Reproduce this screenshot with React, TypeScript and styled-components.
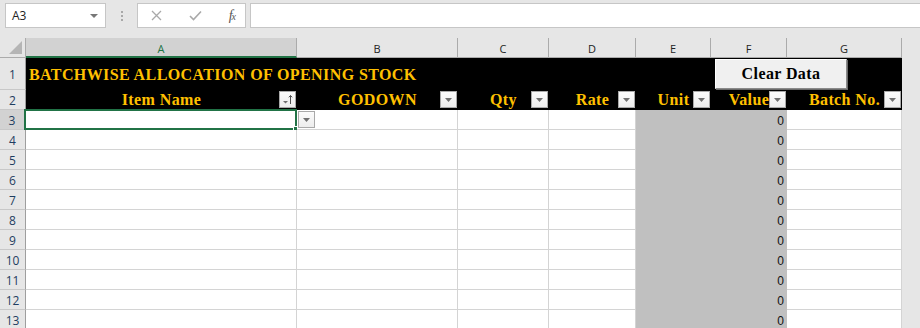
import React from 'react'
import styled, { createGlobalStyle, css } from 'styled-components'

const Colors = {
    chrome: '#e6e6e6',
    header: '#e6e6e6',
    headerSelected: '#d2d2d2',
    headerLine: '#ababab',
    rowLine: '#c8c8c8',
    grid: '#d4d4d4',
    excelGreen: '#217346',
    gold: '#ffc000',
    shaded: '#c0c0c0',
}

const GlobalStyle = createGlobalStyle`
    html, body {
        margin: 0;
        padding: 0;
        background: ${Colors.chrome};
    }
    body {
        width: 920px;
        height: 328px;
        overflow: hidden;
        font-family: "Liberation Sans", Arial, sans-serif;
    }
`

type Column = { key: string; label: string; sort?: boolean; shaded?: boolean; value?: string }

const columns: Column[] = [
    { key: 'A', label: 'Item Name', sort: true },
    { key: 'B', label: 'GODOWN' },
    { key: 'C', label: 'Qty' },
    { key: 'D', label: 'Rate' },
    { key: 'E', label: 'Unit', shaded: true },
    { key: 'F', label: 'Value', shaded: true, value: '0' },
    { key: 'G', label: 'Batch No.' },
]

const dataRows = [3, 4, 5, 6, 7, 8, 9, 10, 11, 12, 13]

// serif used for the sheet's title / headers / button
const bookCss = css`
    font-family: "Liberation Serif", "Times New Roman", serif;
    font-weight: bold;
    font-size: 16px;
    letter-spacing: 0.4px;
`

/* ---------- formula bar ---------- */

const FormulaBar = styled.div`
    height: 38px;
    display: flex;
    align-items: flex-start;
    padding: 3px 0 0 5px;
    box-sizing: border-box;
    background: ${Colors.chrome};
`

const boxCss = css`
    height: 25px;
    background: #fff;
    border: 1px solid #c6c6c6;
    box-sizing: border-box;
    display: flex;
    align-items: center;
`

const NameBox = styled.div`
    ${boxCss}
    width: 101px;
    padding: 0 6px 0 6px;
    justify-content: space-between;
    font-family: "Open Sans", "Noto Sans", sans-serif;
    font-size: 12px;
    color: #222;
`

const Caret = styled.span`
    width: 0;
    height: 0;
    border-left: 4px solid transparent;
    border-right: 4px solid transparent;
    border-top: 4px solid #777;
    margin-right: 1px;
`

const Grip = styled.div`
    width: 31px;
    height: 25px;
    display: flex;
    flex-direction: column;
    align-items: center;
    justify-content: center;
    gap: 2px;
    span {
        width: 2px;
        height: 2px;
        background: #a8a8a8;
    }
`

const IconBox = styled.div`
    ${boxCss}
    width: 109px;
    padding: 0 10px 0 13px;
    justify-content: space-between;
`

const Fx = styled.span`
    font-family: "Liberation Serif", "Times New Roman", serif;
    font-style: italic;
    font-size: 14px;
    color: #555;
    letter-spacing: -1px;
    sub {
        font-size: 10px;
        vertical-align: baseline;
    }
`

const FormulaInput = styled.div`
    ${boxCss}
    flex: 1;
    margin-left: 4px;
    border-right: none;
`

/* ---------- sheet ---------- */

const Sheet = styled.div`
    display: grid;
    grid-template-columns: 26px 271px 161px 91px 87px 75px 76px 115px 1fr;
    grid-template-rows: 20px 32px 20px;
    grid-auto-rows: 20px;
`

const Corner = styled.div`
    background: ${Colors.header};
    border-right: 1px solid ${Colors.headerLine};
    border-bottom: 1px solid ${Colors.headerLine};
    box-sizing: border-box;
    display: flex;
    align-items: flex-end;
    justify-content: flex-end;
    padding: 0 3px 3px 0;
    svg {
        display: block;
    }
`

const ColHead = styled.div<{ $selected?: boolean }>`
    background: ${({ $selected }) => ($selected ? Colors.headerSelected : Colors.header)};
    border-right: 1px solid ${Colors.headerLine};
    border-bottom: ${({ $selected }) => ($selected ? `2px solid ${Colors.excelGreen}` : `1px solid ${Colors.headerLine}`)};
    box-sizing: border-box;
    display: flex;
    align-items: center;
    justify-content: center;
    padding-top: 2px;
    font-family: "Open Sans", "Noto Sans", sans-serif;
    font-size: 11px;
    color: ${({ $selected }) => ($selected ? Colors.excelGreen : '#222')};
`

const Filler = styled.div`
    background: ${Colors.chrome};
`

const RowHead = styled.div<{ $selected?: boolean }>`
    background: ${({ $selected }) => ($selected ? Colors.headerSelected : Colors.header)};
    border-right: ${({ $selected }) => ($selected ? `2px solid ${Colors.excelGreen}` : `1px solid #9e9e9e`)};
    border-bottom: 1px solid ${Colors.rowLine};
    box-sizing: border-box;
    display: flex;
    align-items: center;
    justify-content: center;
    padding-top: 2px;
    font-family: "Open Sans", "Noto Sans", sans-serif;
    font-size: 12px;
    color: #1f3d60;
`

const TitleCell = styled.div`
    grid-column: span 7;
    background: #000;
    position: relative;
    display: flex;
    align-items: center;
    padding: 1px 0 0 3px;
    ${bookCss}
    color: ${Colors.gold};
`

const ClearButton = styled.button`
    position: absolute;
    left: 689px;
    top: 1px;
    width: 132px;
    height: 30px;
    background: #f0f0f0;
    border: 1px solid;
    border-color: #fff #8a8a8a #8a8a8a #fff;
    box-shadow: 1px 1px 0 #6a6a6a;
    ${bookCss}
    color: #000;
    padding: 0;
`

const HeaderCell = styled.div`
    background: #000;
    position: relative;
    display: flex;
    align-items: center;
    justify-content: center;
    ${bookCss}
    color: ${Colors.gold};
`

const DropButton = styled.span<{ $left?: number }>`
    position: absolute;
    top: 1px;
    ${({ $left }) => ($left !== undefined ? `left: ${$left}px;` : 'right: 1px;')}
    width: 17px;
    height: 17px;
    box-sizing: border-box;
    background: linear-gradient(#fbfbfb, #ededed);
    border: 1px solid #a9a9a9;
    display: flex;
    align-items: center;
    justify-content: center;
    z-index: 2;
    svg {
        display: block;
    }
`

const DataCell = styled.div<{ $shaded?: boolean }>`
    background: ${({ $shaded }) => ($shaded ? Colors.shaded : '#fff')};
    border-right: 1px solid ${({ $shaded }) => ($shaded ? Colors.shaded : Colors.grid)};
    border-bottom: 1px solid ${({ $shaded }) => ($shaded ? Colors.shaded : Colors.grid)};
    box-sizing: border-box;
    position: relative;
    display: flex;
    align-items: center;
    justify-content: flex-end;
    padding: 2px 2px 0 0;
    font-family: "Liberation Sans", Arial, sans-serif;
    font-size: 12px;
    color: #111;
`

const Selection = styled.span`
    position: absolute;
    top: -1px;
    left: -2px;
    right: -1px;
    bottom: -1px;
    border: 2px solid ${Colors.excelGreen};
    pointer-events: none;
`

const FillHandle = styled.span`
    position: absolute;
    right: -4px;
    bottom: -4px;
    width: 5px;
    height: 5px;
    background: ${Colors.excelGreen};
    border: 1px solid #fff;
`

const ArrowDown = () => (
    <svg width="7" height="4" viewBox="0 0 7 4">
        <path d="M0 0 H7 L3.5 4 Z" fill="#707070" />
    </svg>
)

const SortArrow = () => (
    <svg width="11" height="11" viewBox="0 0 11 11">
        <path d="M1 7 H6 L3.5 9.5 Z" fill="#707070" />
        <path d="M8.5 10 V1.5 M6.8 3.3 L8.5 1.5 L10.2 3.3" stroke="#505050" strokeWidth="1" fill="none" />
    </svg>
)

const App = () => {
    return (
        <>
            <GlobalStyle />
            <FormulaBar>
                <NameBox>
                    A3
                    <Caret />
                </NameBox>
                <Grip>
                    <span />
                    <span />
                    <span />
                </Grip>
                <IconBox>
                    <svg width="11" height="11" viewBox="0 0 11 11">
                        <path d="M1 1 L10 10 M10 1 L1 10" stroke="#a9a9a9" strokeWidth="1.3" />
                    </svg>
                    <svg width="13" height="11" viewBox="0 0 13 11">
                        <path d="M1 6 L4.5 9.5 L12 1.5" stroke="#a9a9a9" strokeWidth="1.6" fill="none" />
                    </svg>
                    <Fx>
                        f<sub>x</sub>
                    </Fx>
                </IconBox>
                <FormulaInput />
            </FormulaBar>

            <Sheet>
                <Corner>
                    <svg width="13" height="13" viewBox="0 0 13 13">
                        <path d="M13 0 V13 H0 Z" fill="#b5b5b5" />
                    </svg>
                </Corner>
                {columns.map((c) => (
                    <ColHead key={c.key} $selected={c.key === 'A'}>
                        {c.key}
                    </ColHead>
                ))}
                <Filler />

                <RowHead>1</RowHead>
                <TitleCell>
                    BATCHWISE ALLOCATION OF OPENING STOCK
                    <ClearButton>Clear Data</ClearButton>
                </TitleCell>
                <Filler />

                <RowHead>2</RowHead>
                {columns.map((c) => (
                    <HeaderCell key={c.key}>
                        {c.label}
                        <DropButton>{c.sort ? <SortArrow /> : <ArrowDown />}</DropButton>
                    </HeaderCell>
                ))}
                <Filler />

                {dataRows.map((r) => (
                    <React.Fragment key={r}>
                        <RowHead $selected={r === 3}>{r}</RowHead>
                        {columns.map((c) => (
                            <DataCell key={c.key} $shaded={c.shaded}>
                                {c.value}
                                {r === 3 && c.key === 'A' && (
                                    <>
                                        <Selection />
                                        <FillHandle />
                                        <DropButton $left={272}>
                                            <ArrowDown />
                                        </DropButton>
                                    </>
                                )}
                            </DataCell>
                        ))}
                        <Filler />
                    </React.Fragment>
                ))}
            </Sheet>
        </>
    )
}

export default App
